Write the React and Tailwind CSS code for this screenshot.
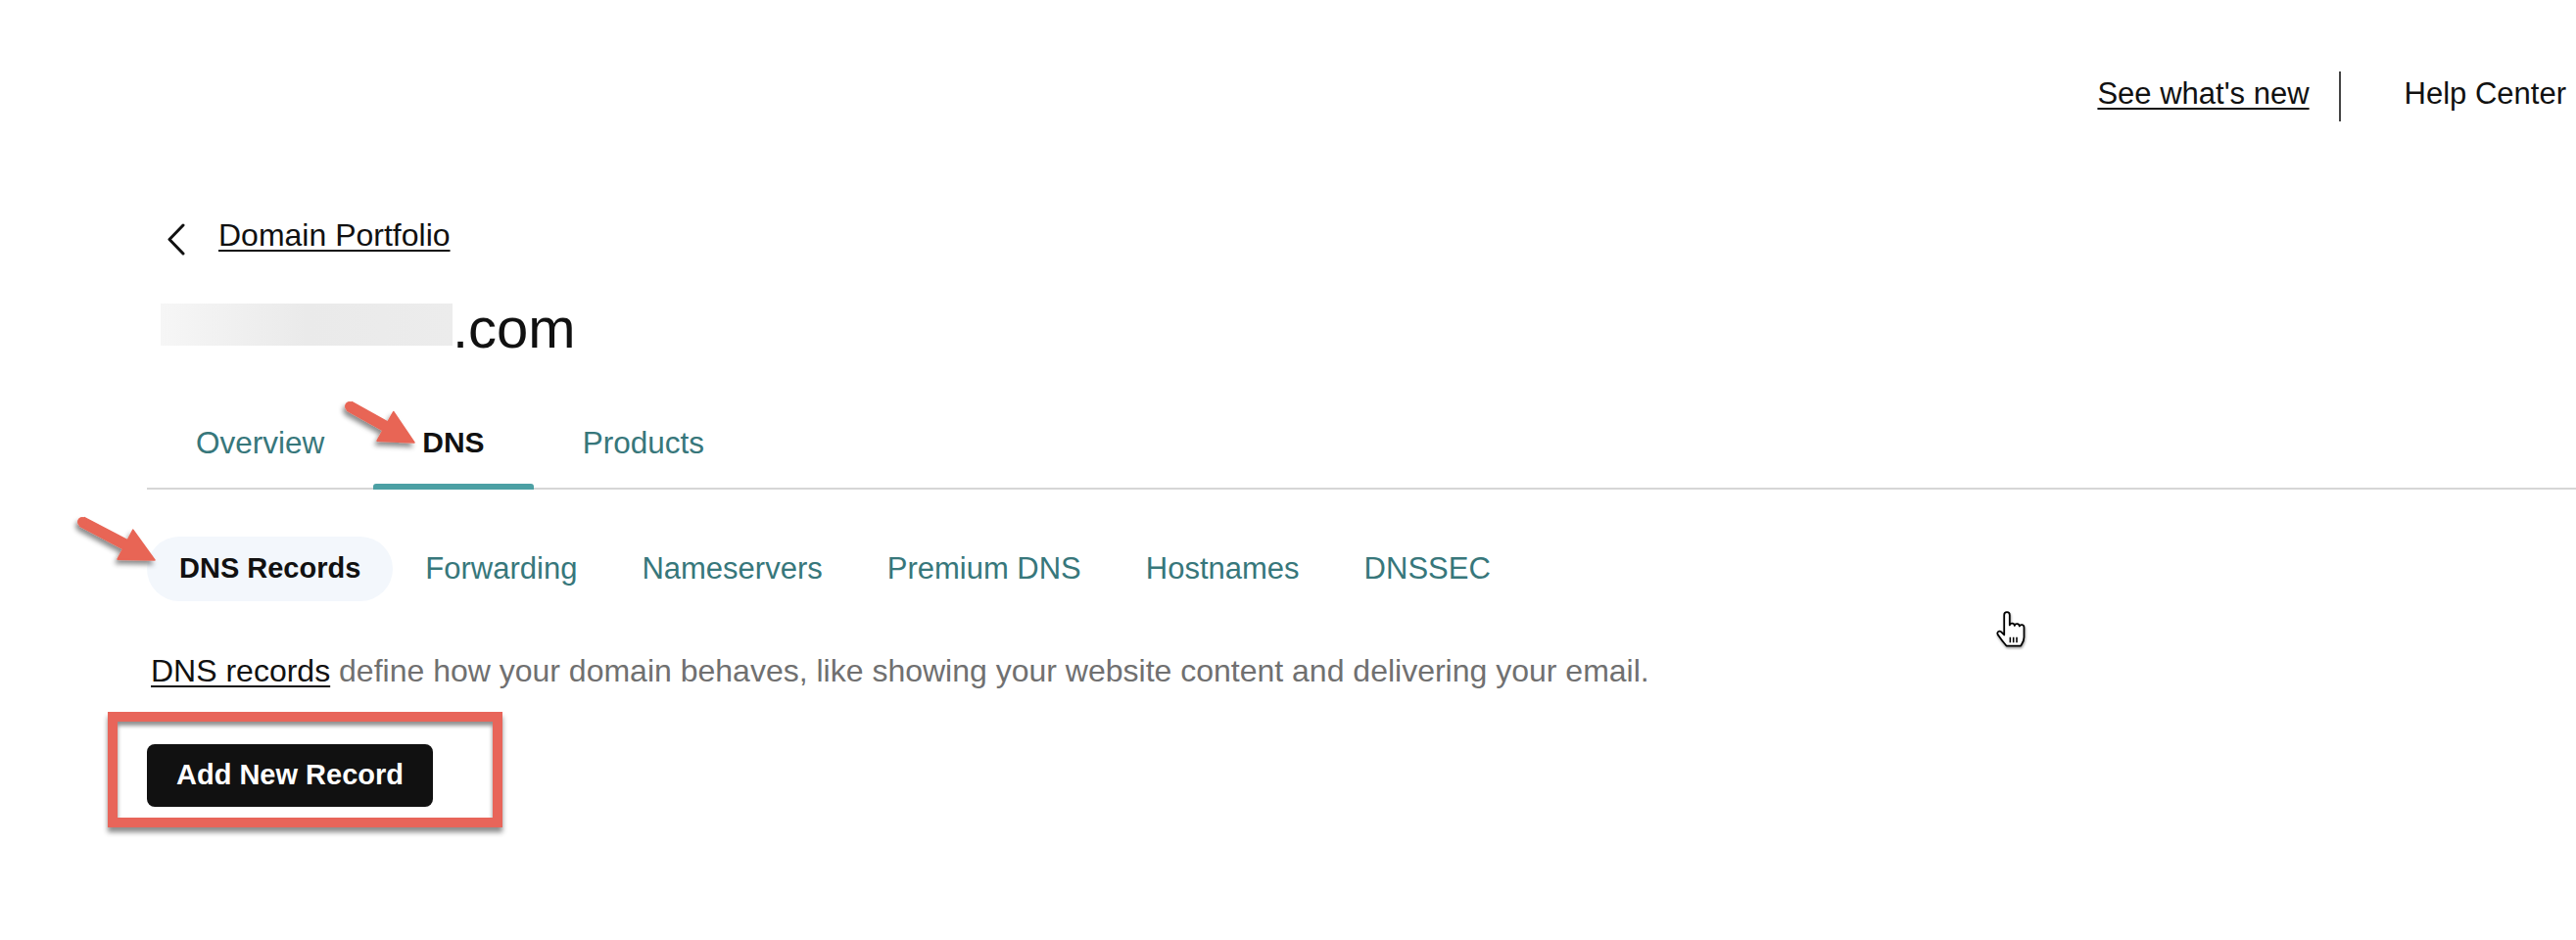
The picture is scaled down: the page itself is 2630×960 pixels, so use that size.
import React from 'react';

const CORAL = '#e86555';

// annotation arrow drawn from tail to tip, page coordinates
const Arrow = ({ from, to }) => {
  const pad = 24;
  const minX = Math.min(from[0], to[0]) - pad;
  const minY = Math.min(from[1], to[1]) - pad;
  const w = Math.abs(to[0] - from[0]) + pad * 2;
  const h = Math.abs(to[1] - from[1]) + pad * 2;
  const tx = from[0] - minX, ty = from[1] - minY;
  const px = to[0] - minX, py = to[1] - minY;
  const len = Math.hypot(px - tx, py - ty);
  const ux = (px - tx) / len, uy = (py - ty) / len;
  const nx = -uy, ny = ux;
  const bx = px - ux * 34, by = py - uy * 34;
  const pt = (x, y) => `${x.toFixed(1)},${y.toFixed(1)}`;
  const pts = [
    pt(tx + nx * 5, ty + ny * 5),
    pt(bx + nx * 5, by + ny * 5),
    pt(bx + nx * 17, by + ny * 17),
    pt(px, py),
    pt(bx - nx * 17, by - ny * 17),
    pt(bx - nx * 5, by - ny * 5),
    pt(tx - nx * 5, ty - ny * 5),
  ].join(' ');
  const id = `sh${Math.round(from[0])}`;
  return (
    <svg
      className="absolute pointer-events-none"
      style={{ left: minX, top: minY }}
      width={w}
      height={h}
      viewBox={`0 0 ${w} ${h}`}
    >
      <defs>
        <filter id={id} x="-30%" y="-30%" width="160%" height="160%">
          <feDropShadow dx="-2" dy="4" stdDeviation="2.5" floodColor="#000" floodOpacity="0.45" />
        </filter>
      </defs>
      <g filter={`url(#${id})`}>
        <polygon points={pts} fill={CORAL} stroke={CORAL} strokeWidth="1.5" strokeLinejoin="round" />
        <circle cx={tx} cy={ty} r="5" fill={CORAL} />
      </g>
    </svg>
  );
};

const HandCursor = () => (
  <svg className="absolute left-[2036px] top-[624px]" width="36" height="40" viewBox="0 0 32 36">
    <defs>
      <filter id="hsh" x="-30%" y="-30%" width="160%" height="160%">
        <feDropShadow dx="0.5" dy="1.5" stdDeviation="1" floodColor="#000" floodOpacity="0.4" />
      </filter>
    </defs>
    <g filter="url(#hsh)">
      <path
        d="M9 3.5a2.5 2.5 0 0 1 5 0V13a2.3 2.3 0 0 1 4.5 0.5a2.3 2.3 0 0 1 4.5 0.5a2.2 2.2 0 0 1 4.2 1V24c0 4-2 6-3 8H11c-1.5-2-3.5-4-5.5-7L3 21.5a2 2 0 0 1 3-2.5L9 22Z"
        fill="#fff"
        stroke="#000"
        strokeWidth="1.6"
        strokeLinejoin="round"
      />
      <path d="M14.5 24v5M17.5 24v5M20.5 24v5" stroke="#000" strokeWidth="1.4" />
    </g>
  </svg>
);

const tabs = ['Overview', 'DNS', 'Products'];
const subTabs = ['DNS Records', 'Forwarding', 'Nameservers', 'Premium DNS', 'Hostnames', 'DNSSEC'];

export default function App() {
  return (
    <div className="relative w-[2630px] h-[960px] bg-white overflow-hidden text-[#111] font-['Liberation_Sans',Arial,sans-serif]">
      {/* top links */}
      <div className="mt-[73px] h-[51px] flex items-center justify-end pr-[10px]">
        <a className="text-[31px] leading-none pb-[6px] underline decoration-2 underline-offset-[4px] text-[#111]">
          See what's new
        </a>
        <div className="ml-[30px] mr-[65px] w-[2px] h-[51px] bg-[#444]" />
        <span className="text-[31px] leading-none pb-[6px] text-[#111]">Help Center</span>
      </div>

      <div className="pl-[150px]">
        {/* breadcrumb */}
        <div className="mt-[100px] h-[40px] flex items-center">
          <svg className="ml-[20px]" width="20" height="34" viewBox="0 0 20 34">
            <path d="M17 3L3 17.5 17 32" fill="none" stroke="#111" strokeWidth="3" strokeLinecap="round" strokeLinejoin="round" />
          </svg>
          <a className="ml-[33px] mb-[8px] text-[32px] leading-none underline decoration-2 underline-offset-[4px]">
            Domain Portfolio
          </a>
        </div>

        {/* domain name */}
        <div className="mt-[42px] h-[58px] flex items-start">
          <div className="ml-[14px] mt-[4px] w-[298px] h-[43px] bg-linear-to-r from-[#f6f6f6] via-[#eaeaea] to-[#ececec]" />
          <span className="text-[58px] leading-none text-[#111]">.com</span>
        </div>

        {/* main tabs */}
        <div className="mt-[58px] flex border-b-2 border-[#d6d6d6]">
          {tabs.map((t) => {
            const active = t === 'DNS';
            return (
              <div key={t} className="relative px-[50px] pt-[15px] pb-[29px]">
                <span
                  className={
                    active
                      ? 'block text-[30px] leading-none font-bold text-[#111]'
                      : 'block text-[31.5px] leading-none text-[#37777b]'
                  }
                >
                  {t}
                </span>
                {active && (
                  <span className="absolute left-0 right-0 -bottom-[2px] h-[6px] rounded-t-[3px] bg-[#4ca0a4]" />
                )}
              </div>
            );
          })}
        </div>

        {/* sub tabs */}
        <div className="mt-[48px] flex">
          {subTabs.map((t, i) =>
            i === 0 ? (
              <div key={t} className="h-[66px] px-[33px] flex items-center rounded-full bg-[#f3f7fc]">
                <span className="text-[29px] leading-none font-bold text-[#111]">{t}</span>
              </div>
            ) : (
              <div key={t} className="h-[66px] px-[33px] flex items-center">
                <span className="text-[31px] leading-none text-[#37777b]">{t}</span>
              </div>
            )
          )}
        </div>

        {/* description */}
        <p className="mt-[55px] ml-[4px] text-[32px] leading-none text-[#707070]">
          <a className="text-[#111] underline decoration-2 underline-offset-[4px]">DNS records</a> define how your domain
          behaves, like showing your website content and delivering your email.
        </p>

        {/* action */}
        <div className="mt-[59px] flex">
          <button className="h-[64px] px-[30px] rounded-[8px] bg-[#111] text-white text-[29px] leading-none font-bold">
            Add New Record
          </button>
        </div>
      </div>

      {/* annotations */}
      <div className="absolute left-[110px] top-[727px] w-[403px] h-[118px] border-[10px] border-[#e8655a] shadow-[0_5px_5px_rgba(0,0,0,0.45),inset_0_4px_4px_rgba(0,0,0,0.45)]" />
      <Arrow from={[357, 415]} to={[423, 452]} />
      <Arrow from={[84, 533]} to={[158, 572]} />
      <HandCursor />
    </div>
  );
}
